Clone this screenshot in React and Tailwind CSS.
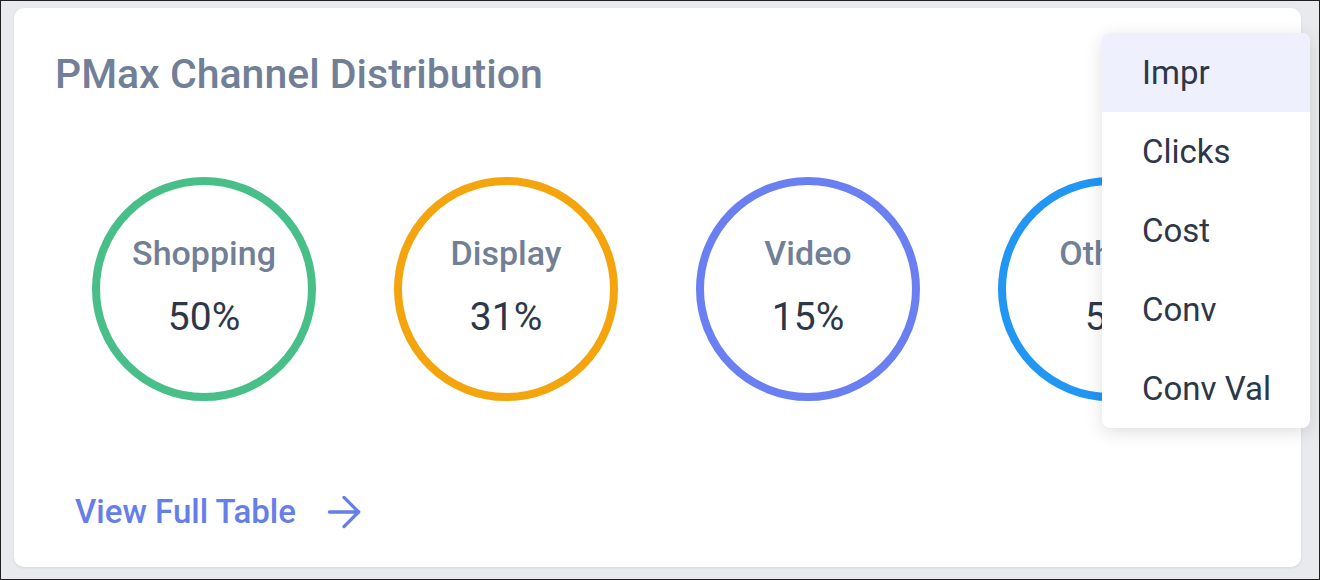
import { ArrowRight } from "lucide-react";

const channels = [
  { name: "Shopping", value: "50%", ring: "border-[#48bf88]" },
  { name: "Display", value: "31%", ring: "border-[#f4a40c]" },
  { name: "Video", value: "15%", ring: "border-[#6a80f2]" },
  { name: "Others", value: "5%", ring: "border-[#2196f3]" },
];

const metrics = ["Impr", "Clicks", "Cost", "Conv", "Conv Val"];

function ChannelRing({ name, value, ring }) {
  return (
    <div
      className={`w-[224px] h-[224px] shrink-0 rounded-full border-[8px] ${ring} flex flex-col items-center justify-center`}
    >
      <div className="text-[34px] leading-[40px] font-medium text-[#718096] -mt-[6px]">{name}</div>
      <div className="text-[39px] leading-[46px] text-[#2d3748] mt-[21px]">{value}</div>
    </div>
  );
}

export default function App() {
  return (
    <div
      className="relative w-[1320px] h-[580px] bg-[#e8eaed] border border-[#1f1f1f] overflow-hidden"
      style={{ fontFamily: "Roboto, 'Liberation Sans', sans-serif" }}
    >
      <div className="ml-[13px] mt-[7px] w-[1287px] h-[559px] bg-white rounded-[10px] shadow-[0_1px_3px_rgba(0,0,0,0.08)] pl-[41px] pt-[41px] flex flex-col">
        <h2 className="text-[41px] leading-[50px] font-medium text-[#718096]">
          PMax Channel Distribution
        </h2>

        <div className="flex gap-[78px] pl-[37px] mt-[78px]">
          {channels.map((c) => (
            <ChannelRing key={c.name} {...c} />
          ))}
        </div>

        <a className="mt-[86px] ml-[20px] flex items-center text-[#667eea] text-[33px] leading-[40px] font-medium cursor-pointer w-fit">
          View Full Table
          <ArrowRight size={50} strokeWidth={1.6} className="ml-[23px]" />
        </a>
      </div>

      {/* metric picker */}
      <div className="absolute left-[1101px] top-[32px] w-[208px] bg-white rounded-[8px] shadow-[0_4px_18px_rgba(0,0,0,0.13)] overflow-hidden">
        {metrics.map((m, i) => (
          <div
            key={m}
            className={`h-[79px] pl-[40px] flex items-center text-[33px] text-[#2d3748] ${
              i === 0 ? "bg-[#eef0fd]" : ""
            }`}
          >
            {m}
          </div>
        ))}
      </div>
    </div>
  );
}
